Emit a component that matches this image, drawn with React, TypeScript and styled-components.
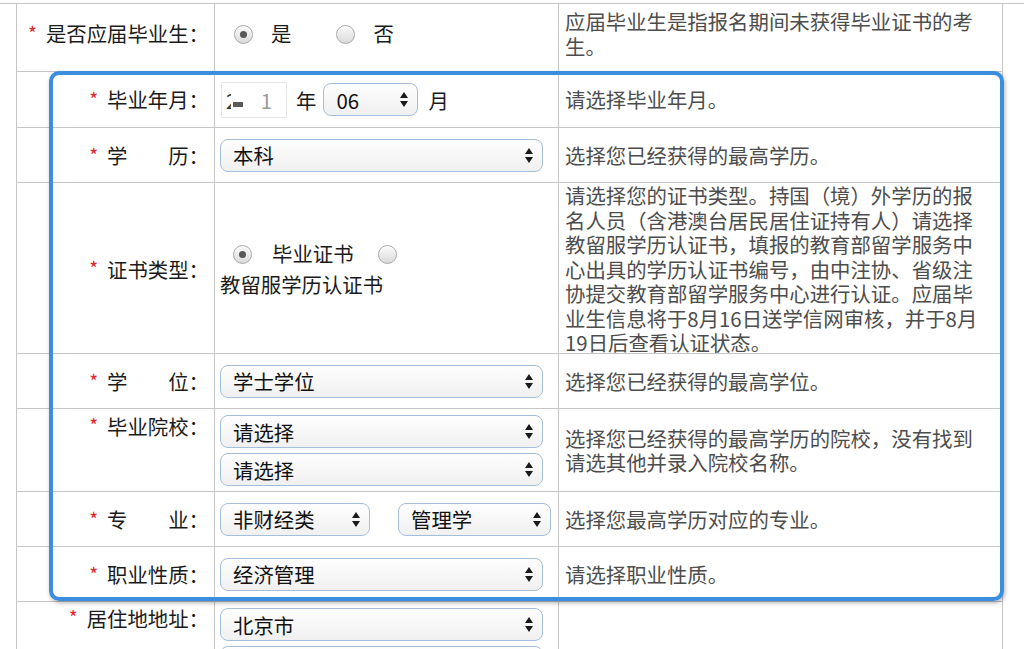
import styled, { createGlobalStyle } from "styled-components";

const GlobalStyle = createGlobalStyle`
  html, body {
    margin: 0;
    padding: 0;
    background: #fff;
  }
  body {
    font-family: "Noto Sans CJK SC", "Noto Sans", sans-serif;
    color: #1b1b1b;
  }
`;

const LINE = "#c6c6c6";

const Page = styled.div`
  position: relative;
  width: 1024px;
  height: 649px;
  overflow: hidden;
  padding-top: 3px;
  box-sizing: border-box;
`;

const Sheet = styled.div`
  border-top: 1px solid ${LINE};
  padding: 0 21px 0 16px;
`;

const Table = styled.div`
  border-left: 1px solid ${LINE};
  border-right: 1px solid ${LINE};
`;

const Row = styled.div<{ $h: number; $lift?: number }>`
  display: grid;
  grid-template-columns: 198px 344px 1fr;
  height: ${({ $h }) => $h}px;
  border-bottom: 1px solid ${LINE};
  box-sizing: border-box;
  & > * {
    padding-bottom: ${({ $lift }) => ($lift ?? 0) * 2}px;
  }
`;

const LabelCell = styled.div<{ $top?: number }>`
  display: flex;
  justify-content: flex-end;
  align-items: ${({ $top }) => ($top !== undefined ? "flex-start" : "center")};
  padding-top: ${({ $top }) => ($top ?? 0)}px;
  padding-right: 5px;
  border-right: 1px solid ${LINE};
  font-size: 20.4px;
  line-height: 1.2;
  white-space: nowrap;
`;

const Req = styled.span`
  color: #e6262d;
  font-size: 19px;
  margin-right: 9px;
`;

const ControlCell = styled.div<{ $stack?: boolean }>`
  display: flex;
  flex-direction: ${({ $stack }) => ($stack ? "column" : "row")};
  align-items: ${({ $stack }) => ($stack ? "flex-start" : "center")};
  gap: ${({ $stack }) => ($stack ? "5px" : "0")};
  padding-top: ${({ $stack }) => ($stack ? "6px" : "0")};
  padding-left: 5px;
  padding-right: 6px;
  border-right: 1px solid ${LINE};
  font-size: 20.4px;
`;

const DescCell = styled.div`
  display: flex;
  align-items: center;
  padding-left: 6px;
  padding-right: 19px;
  font-size: 20.4px;
  line-height: 24.5px;
  color: #4d4d4d;
`;

const SelectBox = styled.div<{ $w: number; $ml?: number }>`
  display: flex;
  align-items: center;
  justify-content: space-between;
  width: ${({ $w }) => $w}px;
  height: 33px;
  margin-left: ${({ $ml }) => $ml ?? 0}px;
  padding: 0 9px 0 12px;
  box-sizing: border-box;
  border: 1px solid #a4bfdc;
  border-radius: 8px;
  background: linear-gradient(#fefefe, #f0f0f0);
  color: #111;
  font-size: 20.4px;
  flex-shrink: 0;
`;

const Arrows = () => (
  <svg width="8" height="15" viewBox="0 0 8 15">
    <path d="M4 0 L8 6 L0 6 Z M0 9 L8 9 L4 15 Z" fill="#1a1a1a" />
  </svg>
);

function Select({ value, width = 323, ml }: { value: string; width?: number; ml?: number }) {
  return (
    <SelectBox $w={width} $ml={ml}>
      <span>{value}</span>
      <Arrows />
    </SelectBox>
  );
}

const Radio = styled.span<{ $on?: boolean; $ml: number; $mr: number }>`
  display: inline-block;
  vertical-align: middle;
  position: relative;
  width: 19px;
  height: 19px;
  margin: -3px ${({ $mr }) => $mr}px 0 ${({ $ml }) => $ml}px;
  box-sizing: border-box;
  border-radius: 50%;
  border: 1px solid #a9a9a9;
  background: linear-gradient(#fbfbfb, #dadada);
  box-shadow: inset 0 1px 1px rgba(255, 255, 255, 0.8);
  &::after {
    content: "";
    display: ${({ $on }) => ($on ? "block" : "none")};
    position: absolute;
    left: 50%;
    top: 50%;
    width: 7px;
    height: 7px;
    margin: -3.5px 0 0 -3.5px;
    border-radius: 50%;
    background: #585858;
  }
`;

const Options = styled.div<{ $lh: number }>`
  line-height: ${({ $lh }) => $lh}px;
  font-size: 20.4px;
  align-self: center;
`;

const OptText = styled.span<{ $mr?: number }>`
  white-space: nowrap;
  margin-right: ${({ $mr }) => $mr ?? 0}px;
`;

const YearBox = styled.div`
  display: flex;
  align-items: center;
  width: 66px;
  height: 36px;
  margin-left: 1px;
  padding-left: 4px;
  box-sizing: border-box;
  border: 1px solid #e6e6e6;
  background: #fff;
  font-size: 20.4px;
`;

const YearHead = styled.span`
  display: inline-block;
  width: 5px;
  overflow: hidden;
  color: #333;
`;

const Redact = styled.span`
  display: inline-block;
  width: 10px;
  height: 5px;
  margin: 9px 0 0 2px;
  background: #5a5a5a;
`;

const YearTail = styled.span`
  margin-left: auto;
  margin-right: 14px;
  color: #9a9a9a;
`;

const Unit = styled.span<{ $ml: number; $mr?: number }>`
  margin: 0 ${({ $mr }) => $mr ?? 0}px 0 ${({ $ml }) => $ml}px;
`;

const Highlight = styled.div`
  position: absolute;
  left: 49px;
  top: 71px;
  width: 955px;
  height: 530px;
  box-sizing: border-box;
  border: 4px solid #3a8ddf;
  border-radius: 10px;
  box-shadow: 1px 2px 4px rgba(0, 0, 0, 0.3);
  pointer-events: none;
`;

function Label({ text, top }: { text: string; top?: number }) {
  return (
    <LabelCell $top={top}>
      <Req>*</Req>
      <span>{text}</span>
    </LabelCell>
  );
}

export default function App() {
  return (
    <Page>
      <GlobalStyle />
      <Sheet>
        <Table>
          <Row $h={68} $lift={4}>
            <Label text="是否应届毕业生：" />
            <ControlCell>
              <Options $lh={31}>
                <Radio $on $ml={14} $mr={18} />
                <OptText $mr={31}>是</OptText>
                <Radio $ml={14} $mr={18} />
                <OptText>否</OptText>
              </Options>
            </ControlCell>
            <DescCell>应届毕业生是指报名期间未获得毕业证书的考生。</DescCell>
          </Row>

          <Row $h={56}>
            <Label text="毕业年月：" />
            <ControlCell>
              <YearBox>
                <YearHead>2</YearHead>
                <Redact />
                <YearTail>1</YearTail>
              </YearBox>
              <Unit $ml={9} $mr={7}>年</Unit>
              <Select value="06" width={95} />
              <Unit $ml={10}>月</Unit>
            </ControlCell>
            <DescCell>请选择毕业年月。</DescCell>
          </Row>

          <Row $h={55}>
            <Label text="学　　历：" />
            <ControlCell>
              <Select value="本科" />
            </ControlCell>
            <DescCell>选择您已经获得的最高学历。</DescCell>
          </Row>

          <Row $h={171}>
            <Label text="证书类型：" />
            <ControlCell>
              <Options $lh={31}>
                <Radio $on $ml={13} $mr={20} />
                <OptText $mr={11}>毕业证书</OptText>
                <Radio $ml={13} $mr={20} />
                <OptText>教留服学历认证书</OptText>
              </Options>
            </ControlCell>
            <DescCell>
              请选择您的证书类型。持国（境）外学历的报名人员（含港澳台居民居住证持有人）请选择教留服学历认证书，填报的教育部留学服务中心出具的学历认证书编号，由中注协、省级注协提交教育部留学服务中心进行认证。应届毕业生信息将于8月16日送学信网审核，并于8月19日后查看认证状态。
            </DescCell>
          </Row>

          <Row $h={55}>
            <Label text="学　　位：" />
            <ControlCell>
              <Select value="学士学位" />
            </ControlCell>
            <DescCell>选择您已经获得的最高学位。</DescCell>
          </Row>

          <Row $h={83}>
            <Label text="毕业院校：" top={5} />
            <ControlCell $stack>
              <Select value="请选择" />
              <Select value="请选择" />
            </ControlCell>
            <DescCell>选择您已经获得的最高学历的院校，没有找到请选其他并录入院校名称。</DescCell>
          </Row>

          <Row $h={55}>
            <Label text="专　　业：" />
            <ControlCell>
              <Select value="非财经类" width={150} />
              <Select value="管理学" width={153} ml={28} />
            </ControlCell>
            <DescCell>选择您最高学历对应的专业。</DescCell>
          </Row>

          <Row $h={55}>
            <Label text="职业性质：" />
            <ControlCell>
              <Select value="经济管理" />
            </ControlCell>
            <DescCell>请选择职业性质。</DescCell>
          </Row>

          <Row $h={100}>
            <Label text="居住地地址：" top={4} />
            <ControlCell $stack>
              <Select value="北京市" />
              <Select value="" />
            </ControlCell>
            <DescCell />
          </Row>
        </Table>
      </Sheet>
      <Highlight />
    </Page>
  );
}
